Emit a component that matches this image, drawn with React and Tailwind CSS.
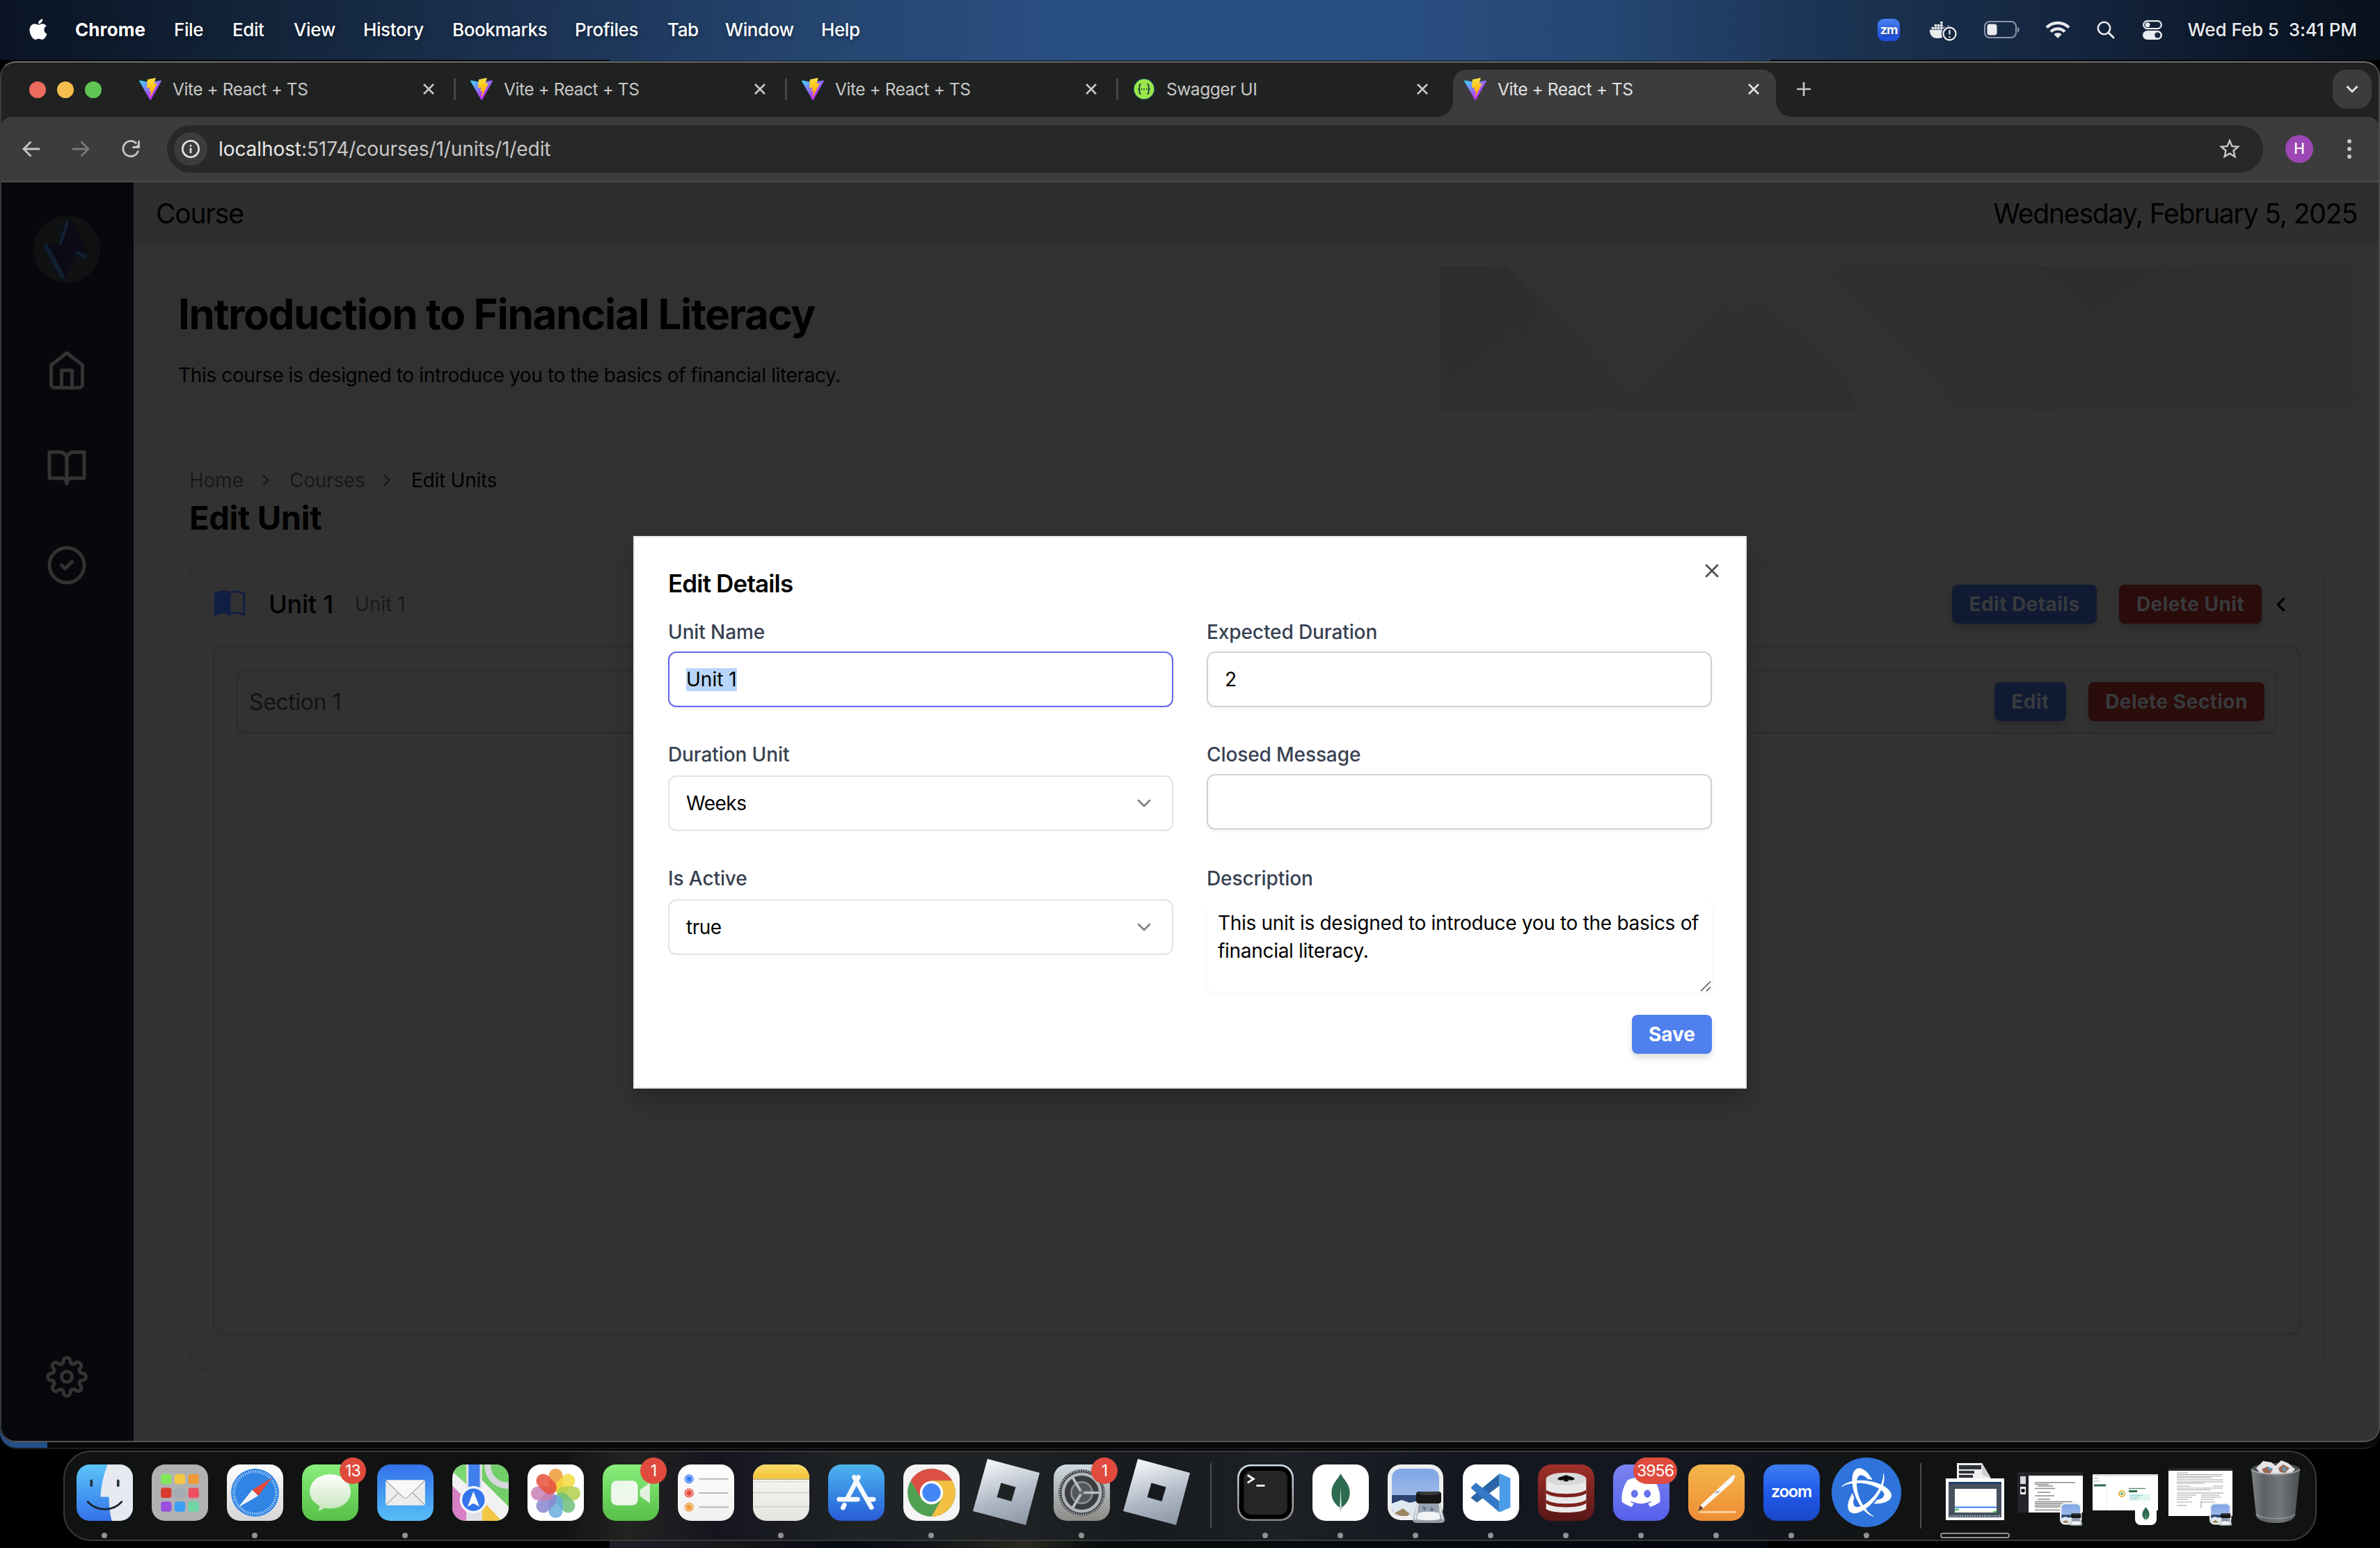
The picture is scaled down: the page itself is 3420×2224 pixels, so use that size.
import React from "react";
import { ChevronDown, ChevronLeft, ChevronRight, CircleCheck, X } from "lucide-react";
import { FiBookOpen, FiHome, FiSettings } from "react-icons/fi";
import { BsBookHalf } from "react-icons/bs";
import { FaApple, FaDiscord, FaDocker } from "react-icons/fa";
import { MdStarBorder } from "react-icons/md";
import { SiBattledotnet } from "react-icons/si";

/* ---------- menu bar ---------- */

const MENUS = [
  ["Chrome", "w-[142px] font-bold tracking-[0.1px]"],
  ["File", "w-[84px]"],
  ["Edit", "w-[88px]"],
  ["View", "w-[100px]"],
  ["History", "w-[128px]"],
  ["Bookmarks", "w-[176px]"],
  ["Profiles", "w-[133px]"],
  ["Tab", "w-[83px]"],
  ["Window", "w-[138px]"],
  ["Help", "w-[80px]"],
];

function MenuBar() {
  return (
    <header className="flex h-[86px] shrink-0 items-center justify-between bg-[linear-gradient(90deg,#0a1424_0%,#13243a_11%,#1c3354_23%,#24456f_34%,#2a4f82_45%,#2a5083_57%,#244672_68%,#1c3555_76%,#14253f_87%,#0b1626_96%,#08111d_100%)] pr-[33px] pb-[1px] pl-[38px] text-[26px] text-white [text-shadow:0_2px_6px_rgba(0,0,0,0.45)]">
      <nav className="flex items-center font-medium tracking-[-0.4px]">
        <div className="w-[70px]">
          <FaApple className="mb-[2px] size-[34px]" />
        </div>
        {MENUS.map(([label, cls]) => (
          <span key={label} className={cls}>
            {label}
          </span>
        ))}
      </nav>
      <div className="flex items-center text-[#e9ebee]">
        <span className="flex size-[32px] items-center justify-center rounded-[9px] bg-gradient-to-b from-[#4a80f0] to-[#1c4ce0] text-[18px] font-bold tracking-[-1px] text-white">
          zm
        </span>
        <div className="relative ml-[43px] h-[34px] w-[40px]">
          <FaDocker className="size-[34px]" />
          <svg viewBox="0 0 22 22" className="absolute right-0 bottom-0 size-[23px]">
            <circle cx="11" cy="11" r="11" fill="#14253f" />
            <circle cx="11" cy="11" r="8.6" fill="none" stroke="currentColor" strokeWidth="2.2" />
            <path d="M11 6v6M11 14.6v1.8" stroke="currentColor" strokeWidth="2.2" />
          </svg>
        </div>
        <svg viewBox="0 0 52 26" className="ml-[38px] h-[26px] w-[52px]">
          <rect x="1" y="1" width="45" height="23" rx="7" fill="none" stroke="#8b97a7" strokeWidth="2" />
          <rect x="4.5" y="4.5" width="14" height="16" rx="3.5" fill="#e9ebee" />
          <path d="M48 8.5c3.4 1.4 3.4 7 0 8.400z" fill="#8b97a7" />
        </svg>
        <svg viewBox="0 0 36 26" className="ml-[36px] h-[26px] w-[36px]" fill="none" stroke="currentColor">
          <path d="M2 9.500C11 .6 25 .6 34 9.500" strokeWidth="4.200" />
          <path d="M8 15.500C13.500 10 22.500 10 28 15.500" strokeWidth="4.200" />
          <path d="M18 25l-5.500-5.700c3-2.600 8-2.600 11 0z" fill="currentColor" stroke="none" />
        </svg>
        <svg viewBox="0 0 26 26" className="ml-[38px] size-[26px]" fill="none" stroke="currentColor" strokeLinecap="round">
          <circle cx="10.500" cy="10.500" r="8.700" strokeWidth="2.600" />
          <path d="M17 17l7 7" strokeWidth="3" />
        </svg>
        <svg viewBox="0 0 28 28" className="ml-[40px] size-[28px]">
          <rect x="1.200" y="1.200" width="25.600" height="11" rx="5.500" fill="none" stroke="currentColor" strokeWidth="2.200" />
          <circle cx="7" cy="6.700" r="3.400" fill="currentColor" />
          <rect x="0" y="15" width="28" height="13" rx="6.500" fill="currentColor" />
          <circle cx="21.300" cy="21.500" r="4" fill="#14253f" />
        </svg>
        <span className="ml-[35px] w-[245px] text-right font-medium tracking-[-0.05px] whitespace-pre">Wed Feb 5  3:41 PM</span>
      </div>
    </header>
  );
}

/* ---------- browser chrome ---------- */

function ViteLogo() {
  return (
    <svg viewBox="0 0 256 257" className="size-[32px] shrink-0">
      <defs>
        <linearGradient id="viteBody" x1="-.8%" x2="57.600%" y1="7.700%" y2="78.400%">
          <stop offset="0%" stopColor="#41D1FF" />
          <stop offset="100%" stopColor="#BD34FE" />
        </linearGradient>
        <linearGradient id="viteBolt" x1="43.400%" x2="50.300%" y1="2.200%" y2="89%">
          <stop offset="0%" stopColor="#FFEA83" />
          <stop offset="8%" stopColor="#FFDD35" />
          <stop offset="100%" stopColor="#FFA800" />
        </linearGradient>
      </defs>
      <path
        fill="url(#viteBody)"
        d="M255.153 37.938L134.897 252.976c-2.483 4.440-8.862 4.466-11.382.048L.875 37.958c-2.746-4.814 1.371-10.646 6.827-9.670l120.385 21.517a6.537 6.537 0 0 0 2.322-.004l117.867-21.483c5.438-.991 9.574 4.796 6.877 9.620Z"
      />
      <path
        fill="url(#viteBolt)"
        d="M185.432.063L96.440 17.501a3.268 3.268 0 0 0-2.634 3.014l-5.474 92.456a3.268 3.268 0 0 0 3.997 3.378l24.777-5.718c2.318-.535 4.413 1.507 3.936 3.838l-7.361 36.047c-.495 2.426 1.782 4.500 4.151 3.780l15.304-4.649c2.372-.720 4.652 1.360 4.150 3.788l-11.698 56.621c-.732 3.542 3.979 5.473 5.943 2.437l1.313-2.028l72.516-144.720c1.215-2.423-.880-5.186-3.540-4.672l-25.505 4.922c-2.396.462-4.435-1.770-3.759-4.114l16.646-57.705c.677-2.350-1.370-4.583-3.769-4.113Z"
      />
    </svg>
  );
}

function SwaggerLogo() {
  return (
    <svg viewBox="0 0 32 32" className="size-[32px] shrink-0">
      <circle cx="16" cy="16" r="15.500" fill="#17435a" />
      <circle cx="16" cy="16" r="14.300" fill="#9be84a" />
      <g fill="none" stroke="#1c3b3f" strokeWidth="1.800">
        <path d="M11.500 9c-2.500 0-2 2-2 4s-.5 3-2 3c1.500 0 2 1 2 3s-.5 4 2 4" />
        <path d="M20.500 9c2.500 0 2 2 2 4s.5 3 2 3c-1.500 0-2 1-2 3s.5 4-2 4" />
      </g>
      <g fill="#1c3b3f">
        <circle cx="12.300" cy="16" r="1.100" />
        <circle cx="16" cy="16" r="1.100" />
        <circle cx="19.700" cy="16" r="1.100" />
      </g>
    </svg>
  );
}

function CloseGlyph() {
  return (
    <svg viewBox="0 0 16 16" className="size-[16px]" stroke="currentColor" strokeWidth="2.600">
      <path d="M1 1l14 14M15 1L1 15" />
    </svg>
  );
}

function Tab({ title, swagger, active, divider }) {
  return (
    <div className={active ? "relative flex h-[78px] w-[476px] items-start text-[#e3e3e3]" : "relative flex h-[78px] w-[476px] items-start text-[#c7c7c7]"}>
      {active && (
        <>
          <div className="absolute top-[10px] left-[12px] h-[68px] w-[464px] rounded-t-[20px] bg-[#3c3c3c]" />
          <svg viewBox="0 0 24 24" className="absolute bottom-0 left-[-12px] size-[24px]">
            <path d="M24 0v24H0C14 24 24 14 24 0z" fill="#3c3c3c" />
          </svg>
          <svg viewBox="0 0 24 24" className="absolute right-[-24px] bottom-0 size-[24px]">
            <path d="M0 0v24h24C10 24 0 14 0 0z" fill="#3c3c3c" />
          </svg>
        </>
      )}
      <div className="relative mt-[10px] flex h-[56px] w-full items-center pr-[24px] pl-[28px]">
        {swagger ? <SwaggerLogo /> : <ViteLogo />}
        <span className="ml-[16px] flex-1 text-[24.500px] tracking-[-0.45px]">{title}</span>
        <CloseGlyph />
      </div>
      {divider && <div className="absolute top-[22px] right-[-7px] h-[32px] w-[3px] rounded bg-[#454746]" />}
    </div>
  );
}

function TabStrip() {
  return (
    <div className="flex h-[78px] items-start bg-[#202221]">
      <div className="flex h-full w-[172px] items-center gap-[16px] pl-[42px]">
        <span className="size-[24px] rounded-full bg-[#ed6a5e]" />
        <span className="size-[24px] rounded-full bg-[#f4bf4f]" />
        <span className="size-[24px] rounded-full bg-[#61c554]" />
      </div>
      <Tab title="Vite + React + TS" divider />
      <Tab title="Vite + React + TS" divider />
      <Tab title="Vite + React + TS" divider />
      <Tab title="Swagger UI" swagger />
      <Tab title="Vite + React + TS" active />
      <svg viewBox="0 0 20 20" className="mt-[28px] ml-[30px] size-[20px]" stroke="#c7c7c7" strokeWidth="2.600">
        <path d="M10 0v20M0 10h20" />
      </svg>
      <div className="mt-[10px] mr-[12px] ml-auto flex size-[56px] items-center justify-center rounded-[20px] bg-[#3c3c3c]">
        <svg viewBox="0 0 18 12" className="h-[12px] w-[18px]" fill="none" stroke="#e3e3e3" strokeWidth="3">
          <path d="M1.500 2L9 9.500 16.500 2" />
        </svg>
      </div>
    </div>
  );
}

function Toolbar() {
  return (
    <div className="bg-[#202221]">
      <div className="flex h-[94px] items-center rounded-t-[18px] border-b-2 border-[#4a4a4a] bg-[#3c3c3c] pl-[32px] text-[#c7c7c7]">
        <svg viewBox="0 0 26 24" className="h-[24px] w-[26px]" fill="none" stroke="currentColor" strokeWidth="2.800">
          <path d="M25 12H2.500M12.500 1.500L2 12l10.500 10.500" />
        </svg>
        <svg viewBox="0 0 26 24" className="ml-[45px] h-[24px] w-[26px]" fill="none" stroke="#7a7a7a" strokeWidth="2.800">
          <path d="M1 12h22.500M13.500 1.500L24 12 13.500 22.500" />
        </svg>
        <svg viewBox="0 0 26 26" className="ml-[46px] size-[26px]" fill="none" stroke="currentColor" strokeWidth="2.800">
          <path d="M23.500 15.500A11 11 0 1 1 21 5.200" />
          <path d="M24.500 1v9.500H15.500" />
          <path d="M24.500 5v5.500H19z" fill="currentColor" stroke="none" />
        </svg>
        <div className="ml-[39px] flex h-[68px] w-[3012px] items-center rounded-full bg-[#282828] pl-[10px]">
          <div className="flex size-[48px] items-center justify-center rounded-full bg-[#3c3c3c]">
            <svg viewBox="0 0 26 26" className="size-[26px]" fill="none" stroke="#e3e3e3">
              <circle cx="13" cy="13" r="11.700" strokeWidth="2.600" />
              <path d="M13 11.500V19M13 7v2.600" strokeWidth="2.600" />
            </svg>
          </div>
          <span className="ml-[16px] text-[28px] tracking-[-0.08px] text-[#c7c7c7]">
            <span className="text-[#e8e8e8]">localhost</span>:5174/courses/1/units/1/edit
          </span>
          <MdStarBorder className="mr-[30px] ml-auto size-[36px]" />
        </div>
        <span className="ml-[32px] flex size-[40px] items-center justify-center rounded-full bg-[#9c47b5] text-[21px] font-medium text-white">H</span>
        <div className="ml-[49px] flex flex-col gap-[5px]">
          <i className="size-[6px] rounded-full bg-[#c7c7c7]" />
          <i className="size-[6px] rounded-full bg-[#c7c7c7]" />
          <i className="size-[6px] rounded-full bg-[#c7c7c7]" />
        </div>
      </div>
    </div>
  );
}

/* ---------- course page ---------- */

function SideNav() {
  return (
    <aside className="flex w-[192px] shrink-0 flex-col items-center bg-[#06080c] pt-[48px] pb-[62px] text-[#333333]">
      <svg viewBox="0 0 96 96" className="size-[96px]">
        <circle cx="48" cy="48" r="48" fill="#0f1113" />
        <path d="M52 4C62 22 72 40 79 54L62 56 44 92 18 41 40 42z" fill="#0b0a15" />
        <g fill="none" stroke="#0f2033" strokeLinecap="round">
          <path d="M48.500 10L39 40" strokeWidth="4.500" />
          <path d="M18 43L42 88" strokeWidth="6" />
          <path d="M63 53L74 58" strokeWidth="5" />
        </g>
      </svg>
      <FiHome className="mt-[96px] size-[60px]" />
      <FiBookOpen className="mt-[80px] size-[60px]" />
      <CircleCheck className="mt-[80px] size-[60px]" />
      <FiSettings className="mt-auto size-[60px]" />
    </aside>
  );
}

function Hero() {
  return (
    <section className="mx-[32px] mt-[32px] flex h-[208px] justify-between overflow-hidden rounded-[20px] bg-[#313131]">
      <div className="p-[32px]">
        <h1 className="text-[60px] leading-[74px] font-bold tracking-[-1.300px]">Introduction to Financial Literacy</h1>
        <p className="mt-[31px] text-[28px] leading-[40px] tracking-[-0.360px]">This course is designed to introduce you to the basics of financial literacy.</p>
      </div>
      <svg viewBox="0 0 1318 208" className="h-[208px] w-[1318px]">
        <defs>
          <linearGradient id="facetA" x1="0" x2="1" y1="0" y2="1">
            <stop offset="0" stopColor="#2d2d2d" />
            <stop offset="1" stopColor="#303030" />
          </linearGradient>
          <linearGradient id="facetB" x1="0" x2="0" y1="0" y2="1">
            <stop offset="0" stopColor="#313131" />
            <stop offset="1" stopColor="#2f2f2f" />
          </linearGradient>
        </defs>
        <rect width="1318" height="208" fill="#303030" />
        <path d="M92 0H580L566 16 752 208H296z" fill="#313131" />
        <path d="M0 0H92L296 208H0z" fill="url(#facetA)" />
        <path d="M432 20L580 168Q594 184 594 208H256z" fill="url(#facetB)" />
        <path d="M504 92L400 208H594Q594 184 580 168z" fill="#2f2f2f" />
        <path d="M859 0H1040L931 71z" fill="#2e2e2e" />
        <path d="M1040 0H1086L880 208H852L955 98 931 71z" fill="#2f2f2f" />
      </svg>
    </section>
  );
}

function PageButton({ children, className }) {
  return (
    <span
      className={
        "flex h-[56px] items-center justify-center rounded-[8px] text-[28px] font-bold tracking-[0.450px] text-[#383a3d] shadow-[0_6px_10px_rgba(0,0,0,0.15)] " + className
      }
    >
      {children}
    </span>
  );
}

function UnitCard() {
  return (
    <section className="mx-[80px] h-[1162px] rounded-[24px] border-2 border-[#2e2e2e] p-[32px] pb-[48px]">
      <div className="flex h-[56px] items-center">
        <BsBookHalf className="ml-[2px] size-[44px] text-[#111e43]" />
        <span className="ml-[34px] w-[124px] text-[36px] font-medium tracking-[-0.200px]">Unit 1</span>
        <span className="text-[28px] text-[#18191b]">Unit 1</span>
        <div className="mr-[12px] ml-auto flex items-center">
          <PageButton className="w-[208px] bg-[#101b33]">Edit Details</PageButton>
          <PageButton className="ml-[32px] w-[205px] bg-[#2a0c0a]">Delete Unit</PageButton>
          <ChevronLeft className="ml-[11px] size-[33px]" strokeWidth={2.5} />
        </div>
      </div>
      <div className="mt-[32px] h-[990px] rounded-[16px] border-2 border-[#2b2b2b] p-[32px]">
        <div className="flex h-[92px] items-center rounded-[12px] border-2 border-[#2b2b2b] px-[16px]">
          <span className="pt-[2px] text-[32px] tracking-[-0.4px] text-[#111315]">Section 1</span>
          <PageButton className="ml-auto w-[103px] bg-[#101b33]">Edit</PageButton>
          <PageButton className="ml-[32px] w-[253px] bg-[#2a0c0a]">Delete Section</PageButton>
        </div>
      </div>
    </section>
  );
}

function CoursePage() {
  return (
    <main className="flex min-w-0 flex-1 flex-col bg-[#323232] text-black">
      <div className="flex h-[88px] shrink-0 items-center justify-between bg-[#2e2e2e] pt-[2px] pr-[33px] pl-[32px] text-[39px]">
        <span className="tracking-[-1.200px]">Course</span>
        <span className="tracking-[-1.150px]">Wednesday, February 5, 2025</span>
      </div>
      <Hero />
      <div className="mt-[80px] flex h-[40px] items-center px-[80px] text-[28px] tracking-[-0.250px] text-[#181818]">
        <span className="w-[96px]">Home</span>
        <ChevronRight className="size-[28px]" />
        <span className="ml-[20px] w-[126px]">Courses</span>
        <ChevronRight className="size-[28px]" />
        <span className="ml-[21px] text-black">Edit Units</span>
      </div>
      <h2 className="mb-[28px] h-[68px] px-[80px] text-[47px] leading-[68px] font-bold tracking-[-0.300px]">Edit Unit</h2>
      <UnitCard />
    </main>
  );
}

/* ---------- edit dialog ---------- */

function Label({ children }) {
  return <div className="text-[28px] leading-[40px] font-medium tracking-[-0.100px] text-[#374151]">{children}</div>;
}

function Input({ children, focused }) {
  return (
    <div
      className={
        focused
          ? "mt-[8px] flex h-[80px] items-center rounded-[12px] border-2 border-[#6366f1] px-[24px] text-[28px] shadow-[0_2px_4px_rgba(0,0,0,0.05)]"
          : "mt-[8px] flex h-[80px] items-center rounded-[12px] border-2 border-[#d1d1da] px-[24px] text-[28px] shadow-[0_2px_4px_rgba(0,0,0,0.05)]"
      }
    >
      {children}
    </div>
  );
}

function Select({ children }) {
  return (
    <div className="mt-[10px] flex h-[80px] items-center justify-between rounded-[12px] border-2 border-[#e4e4e7] px-[24px] text-[28px] tracking-[-0.500px]">
      {children}
      <ChevronDown className="size-[32px] text-[#808080]" />
    </div>
  );
}

function EditDialog() {
  return (
    <div className="absolute top-[770px] left-[910px] h-[794px] w-[1600px] border-2 border-[#e5e5e5] bg-white p-[48px] text-black shadow-[0_20px_30px_rgba(0,0,0,0.2)]">
      <X className="absolute top-[32px] right-[32px] size-[32px] text-[#4d4d4d]" />
      <h3 className="text-[35px] leading-[36px] font-semibold tracking-[-0.850px]">Edit Details</h3>
      <div className="mt-[32px] grid grid-cols-2 gap-x-[48px] gap-y-[48px]">
        <div>
          <Label>Unit Name</Label>
          <Input focused>
            <span className="bg-[#b8d5fb] leading-[33px]">Unit 1</span>
          </Input>
        </div>
        <div>
          <Label>Expected Duration</Label>
          <Input>2</Input>
        </div>
        <div>
          <Label>Duration Unit</Label>
          <Select>Weeks</Select>
        </div>
        <div>
          <Label>Closed Message</Label>
          <Input />
        </div>
        <div>
          <Label>Is Active</Label>
          <Select>true</Select>
        </div>
        <div>
          <Label>Description</Label>
          <div className="relative mt-[8px] h-[136px] rounded-[12px] px-[16px] pt-[16px] text-[28px] leading-[40px] tracking-[-0.300px] whitespace-nowrap shadow-[0_2px_4px_rgba(0,0,0,0.05)]">
            This unit is designed to introduce you to the basics of
            <br />
            financial literacy.
            <svg viewBox="0 0 16 16" className="absolute right-[1px] bottom-[1px] size-[16px]" stroke="#555555" strokeWidth="1.600">
              <path d="M1 15L15 1M9 15l6-6" />
            </svg>
          </div>
        </div>
      </div>
      <div className="mt-[32px] flex justify-end">
        <span className="flex h-[56px] w-[115px] items-center justify-center rounded-[8px] bg-[#4f80ee] text-[28px] font-bold text-white shadow-[0_6px_10px_rgba(0,0,0,0.13)]">
          Save
        </span>
      </div>
    </div>
  );
}

/* ---------- dock ---------- */

function Tile({ className, children }) {
  return (
    <svg viewBox="0 0 80 80" className={"size-[81px] rounded-[19px] " + className}>
      {children}
    </svg>
  );
}

function Finder() {
  return (
    <Tile className="bg-gradient-to-b from-[#5ec5f7] to-[#3670ea]">
      <path d="M44 0C38 16 35 30 34 46h12c0 12 1 22 4 34h30V0z" fill="#e6eaf0" />
      <path d="M21 23v7M59 23v7" stroke="#22303c" strokeWidth="3.600" strokeLinecap="round" />
      <path d="M16 53c12 14 36 14 48 0" fill="none" stroke="#17212b" strokeWidth="2.800" strokeLinecap="round" />
    </Tile>
  );
}

const PADS = ["#7fe85a", "#f4c845", "#ee9a38", "#d93a2c", "#a3adb2", "#ee4f62", "#9a4fe0", "#3aa0f5", "#6fd6a8"];

function Launchpad() {
  return (
    <Tile className="bg-[#b0b1b3]">
      {PADS.map((c, i) => (
        <rect key={c} x={13 + (i % 3) * 19.5} y={13.5 + Math.floor(i / 3) * 19.5} width="15" height="14.500" rx="3.500" fill={c} />
      ))}
    </Tile>
  );
}

function Safari() {
  return (
    <Tile className="bg-gradient-to-b from-white to-[#d5d5d7]">
      <circle cx="40" cy="40" r="34" fill="#2f84e4" />
      <circle cx="40" cy="40" r="30" fill="none" stroke="#cfe6fb" strokeWidth="4" strokeDasharray="1 2.140" />
      <path d="M64 19L44.500 44.500 36 36z" fill="#e5483b" />
      <path d="M16 61L44.500 44.500 36 36z" fill="#f3f4f6" />
    </Tile>
  );
}

function Messages() {
  return (
    <Tile className="bg-gradient-to-b from-[#88ef7c] to-[#57bf47]">
      <defs>
        <linearGradient id="bubble" x1="0" x2="0" y1="0" y2="1">
          <stop offset="0" stopColor="#ffffff" />
          <stop offset="1" stopColor="#c5e6bb" />
        </linearGradient>
      </defs>
      <path d="M40 14c17 0 29 10.500 29 24.500S57 62.500 40 62.500c-3 0-5.500-.3-8-1-2.500 2.500-6 4-10 4.200 2-2 3-4.500 2.800-7.200C16 54 11 47 11 38.500 11 24.500 23 14 40 14z" fill="url(#bubble)" />
    </Tile>
  );
}

function Mail() {
  return (
    <Tile className="bg-gradient-to-b from-[#3670ea] to-[#58bdf7]">
      <rect x="12" y="22" width="56" height="36" rx="2.500" fill="#ececec" />
      <path d="M13 57l20-20M67 57L47 37" stroke="#a9a9a9" strokeWidth="1.200" />
      <path d="M12.500 23l24 23c2 2 5 2 7 0l24-23" fill="#f8f8f8" stroke="#a9a9a9" strokeWidth="1.200" />
    </Tile>
  );
}

function Maps() {
  return (
    <Tile className="bg-[#f1f1f3]">
      <path d="M0 0h20v28L0 10z" fill="#7cd672" />
      <path d="M42 0h38v60L42 22z" fill="#72ce68" />
      <path d="M50 0c0 18 12 30 30 30" fill="none" stroke="#d6d8dc" strokeWidth="9" />
      <path d="M0 30l20 20v30H0z" fill="#d77fc4" />
      <path d="M42 50l28 30H42z" fill="#f3c746" />
      <path d="M20 0h22v80H20z" fill="#dfe1e6" />
      <path d="M23 0h16v36H23z" fill="#3f7fee" />
      <circle cx="30" cy="50" r="19.500" fill="#f4f5f8" />
      <circle cx="30" cy="50" r="16" fill="#3576ee" />
      <path d="M30 38l8.500 22L30 55l-8.500 5z" fill="#fff" />
    </Tile>
  );
}

const PETALS = ["#f09a37", "#f3da3c", "#b3cf4c", "#6fbf7c", "#6aaede", "#8a86cf", "#c97fb2", "#e8503c"];

function Photos() {
  return (
    <Tile className="bg-white">
      {PETALS.map((c, i) => (
        <rect key={c} x="30" y="6" width="20" height="33" rx="10" fill={c} opacity="0.85" transform={`rotate(${i * 45} 40 41)`} />
      ))}
    </Tile>
  );
}

function FaceTime() {
  return (
    <Tile className="bg-gradient-to-b from-[#88ef7c] to-[#57bf47]">
      <rect x="12" y="23" width="38" height="35" rx="8" fill="#eef7ec" />
      <path d="M53 36l14-10v29L53 45z" fill="#e2f2de" />
    </Tile>
  );
}

function Reminders() {
  return (
    <Tile className="bg-gradient-to-b from-white to-[#f1f0ee]">
      {["#3478f6", "#e5483b", "#ef9a35"].map((c, i) => (
        <g key={c}>
          <circle cx="16" cy={20.500 + i * 20} r="5.700" fill="none" stroke={c} strokeWidth="1.500" />
          <circle cx="16" cy={20.500 + i * 20} r="3.900" fill={c} />
          <path d={`M30 ${20.500 + i * 20}h42`} stroke="#b9b9be" strokeWidth="1.800" />
        </g>
      ))}
    </Tile>
  );
}

function Notes() {
  return (
    <Tile className="bg-gradient-to-b from-[#fbfaf8] to-[#e6e4df]">
      <defs>
        <linearGradient id="noteTop" x1="0" x2="0" y1="0" y2="1">
          <stop offset="0" stopColor="#f9dc6c" />
          <stop offset="1" stopColor="#f3c434" />
        </linearGradient>
      </defs>
      <rect width="80" height="20" fill="url(#noteTop)" />
      <path d="M0 21h80" stroke="#b9a877" strokeWidth="1.400" />
      <path d="M2 24.500h76" stroke="#b5b2aa" strokeWidth="1.500" strokeDasharray="1.500 2" />
      <path d="M0 40h80M0 60h80" stroke="#cfcdc8" strokeWidth="1.300" />
    </Tile>
  );
}

function AppStore() {
  return (
    <Tile className="bg-gradient-to-b from-[#4fb4ee] to-[#2a5bd8]">
      <g stroke="#f6f9fd" strokeWidth="6.500" strokeLinecap="round">
        <path d="M43 18L27.500 47.500M37 18l24.500 43" />
        <path d="M15.500 49.500H42M56 49.500h8.500" />
        <path d="M23 57.500l-2 4" />
      </g>
    </Tile>
  );
}

function Chrome() {
  return (
    <Tile className="bg-[#f4f4f4]">
      <circle cx="40" cy="40" r="34" fill="#51a153" />
      <path d="M10.600 23A34 34 0 0 1 69.400 23H40L25.300 48.500z" fill="#dc5044" />
      <path d="M69.400 23A34 34 0 0 1 40 74L54.700 48.500 40 23z" fill="#f3c044" />
      <circle cx="40" cy="40" r="16.500" fill="#fff" />
      <circle cx="40" cy="40" r="13" fill="#4285f4" />
    </Tile>
  );
}

function Roblox() {
  return (
    <svg viewBox="0 0 96 96" className="size-[96px]">
      <defs>
        <linearGradient id="robloxSteel" x1="0.300" x2="0.600" y1="0" y2="1">
          <stop offset="0" stopColor="#f6f8fb" />
          <stop offset="0.550" stopColor="#b4bdc9" />
          <stop offset="1" stopColor="#8f99a8" />
        </linearGradient>
      </defs>
      <path fillRule="evenodd" fill="url(#robloxSteel)" d="M21 0l75 20-20 75L0 75zM40.500 34.500l-6 20.500 21 6 6-20.500z" />
    </svg>
  );
}

function SystemSettings() {
  return (
    <Tile className="bg-gradient-to-b from-[#cfdbe2] to-[#8d8a86]">
      <circle cx="40" cy="40" r="33" fill="#3b3d3f" />
      <circle cx="40" cy="40" r="31.500" fill="none" stroke="#a6a9ac" strokeWidth="3" strokeDasharray="1.700 1.600" />
      <circle cx="40" cy="40" r="26.500" fill="none" stroke="#b2b5b8" strokeWidth="4.500" />
      <circle cx="40" cy="40" r="15" fill="#55585b" stroke="#8d9093" strokeWidth="2.500" />
      <path d="M40 40h25M40 40L27 18.500M40 40L27 61.500" stroke="#bcbfc2" strokeWidth="3.600" />
      <circle cx="40" cy="40" r="3" fill="#6b6e70" />
    </Tile>
  );
}

function Terminal() {
  return (
    <Tile className="bg-gradient-to-b from-[#cfe0ea] to-[#8a8480]">
      <rect x="2.500" y="2.500" width="75" height="75" rx="17" fill="#000" />
      <rect x="9" y="9" width="62" height="62" rx="10" fill="#252525" />
      <path d="M14.500 15l8.500 5.500-8.500 5.500" fill="none" stroke="#fff" strokeWidth="2.800" />
      <path d="M27 30h12" stroke="#fff" strokeWidth="2.800" />
    </Tile>
  );
}

function Mongo({ small }) {
  return (
    <svg viewBox="0 0 80 80" className={small ? "size-[31px] rounded-[8px] bg-white" : "size-[81px] rounded-[19px] bg-white"}>
      <path d="M40 13c5 9 13 15 13 27 0 11-6 17-11.500 21L40 67l-1.500-6C33 57 27 51 27 40c0-12 8-18 13-27z" fill="#2d6a4f" />
      <path d="M40 32l1.200 28L40 67l-1.200-7z" fill="#dfe9e2" />
    </svg>
  );
}

function Preview({ small }) {
  return (
    <svg viewBox="0 0 84 84" className={small ? "size-[33px]" : "mt-[3px] ml-[3px] size-[84px]"}>
      <defs>
        <linearGradient id="sky" x1="0" x2="0" y1="0" y2="1">
          <stop offset="0" stopColor="#7fa6e6" />
          <stop offset="1" stopColor="#b3c6e8" />
        </linearGradient>
      </defs>
      <rect width="80" height="80" rx="19" fill="#efefef" />
      <rect x="6" y="6" width="68" height="68" rx="13" fill="url(#sky)" />
      <path d="M6 44h68v17a13 13 0 0 1-13 13H19A13 13 0 0 1 6 61z" fill="#2d4470" />
      <path d="M6 56l14-5 12 4 12-3v22H19A13 13 0 0 1 6 61z" fill="#dfe8f0" />
      <path d="M10 70l12-7 10 8-4 3h-9z" fill="#9c8560" />
      <path d="M43 54h32l7 24c1 4-2 6-6 6H42c-4 0-7-2-6-6z" fill="#a9b1ba" opacity="0.850" />
      <path d="M44 55l-5 24M74 55l5 24" stroke="#e9ecee" strokeWidth="2" />
      <path d="M44 70c6-3 24-3 30 0l2 8c-6 3-28 3-34 0z" fill="#f1f3f4" />
      <path d="M50 60l5 2-2 5zM63 61l4 5-6 1z" fill="#5d6b86" />
      <rect x="41" y="39" width="36" height="17" rx="4" fill="#161616" />
      <ellipse cx="59" cy="41.500" rx="16" ry="2.500" fill="#3b3b3b" />
    </svg>
  );
}

function VSCode() {
  return (
    <Tile className="bg-white">
      <path d="M52 13v17L20 54l-8-6 0-1.500z" fill="#2a66a8" />
      <path d="M18.500 26L52 52v16L12 34v-2z" fill="#3478c6" />
      <path d="M52 12.500l15.500 7V61L52 68z" fill="#4a9be8" />
    </Tile>
  );
}

function SequelAce() {
  return (
    <Tile className="bg-gradient-to-b from-[#a0302a] to-[#581716]">
      <path d="M11.500 20v43c6 7 51 7 57 0V20z" fill="#e9e9e9" />
      <path d="M11.500 36c10 7.500 47 7.500 57 0v5c-10 7.500-47 7.500-57 0zM11.500 50c10 7.500 47 7.500 57 0v5c-10 7.500-47 7.500-57 0z" fill="#7d201d" />
      <ellipse cx="40" cy="20.500" rx="28.500" ry="9" fill="#d9d9d9" />
      <path d="M40 15c4 1.500 12 3 12 5.500 0 2-7 2.600-10 1l2 2.500h-8l2-2.500c-3 1.600-10 1-10-1 0-2.500 8-4 12-5.500z" fill="#0a0a0a" />
    </Tile>
  );
}

function Discord() {
  return (
    <div className="flex size-[81px] items-center justify-center rounded-[19px] bg-gradient-to-b from-[#7b83f0] to-[#5560ea] text-white">
      <FaDiscord className="size-[60px]" />
    </div>
  );
}

function Pages() {
  return (
    <Tile className="bg-gradient-to-b from-[#f4b64a] to-[#ee8d35]">
      <path d="M15 67.500h52" stroke="#fbd7a4" strokeWidth="2.600" />
      <path d="M66 15c1 2-1 7-3 10L21 62l-7 5 3-9L60 18c2-2 5-4 6-3z" fill="#f7f7f7" />
      <path d="M14 67l7-5-4-4z" fill="#55432f" />
      <path d="M38 40l6-1.500" stroke="#a9a9a9" strokeWidth="2" />
    </Tile>
  );
}

function Zoom() {
  return (
    <div className="flex size-[81px] items-center justify-center rounded-[19px] bg-gradient-to-b from-[#3e7df0] via-[#2059ea] to-[#1b47c8] pb-[2px] text-[23.500px] font-semibold tracking-[-1.200px] text-white">
      zoom
    </div>
  );
}

function BattleNet() {
  return (
    <div className="flex size-[100px] items-center justify-center rounded-full bg-[#2f74dc] text-white">
      <SiBattledotnet className="size-[72px]" />
    </div>
  );
}

function DocStack() {
  return (
    <svg viewBox="0 0 84 84" className="size-[84px]">
      <path d="M16 0h36l12 20v6H16z" fill="#efefef" />
      <path d="M19 3h32v6H19zM19 11h22v4H19zM19 17h20v4H19z" fill="#30343a" />
      <path d="M52 0v17l13 5z" fill="#cfcfcf" />
      <rect y="22" width="84" height="60" fill="#fff" />
      <rect x="4" y="27" width="76" height="51" fill="#46505f" />
      <rect x="4" y="27" width="76" height="3" fill="#223f68" />
      <rect x="13" y="37" width="60" height="34" fill="#fff" />
      <path d="M13 63.500h60" stroke="#3f7af0" strokeWidth="2" />
      <path d="M13 67h6M68 70h5" stroke="#58c45c" strokeWidth="2.500" />
      <path d="M6 76h72" stroke="#a6b4c6" strokeWidth="2" strokeDasharray="2 1.500" />
    </svg>
  );
}

function DarkDocThumb() {
  return (
    <div className="relative h-[96px] w-[94px] pt-[19px]">
      <svg viewBox="0 0 94 58" className="h-[58px] w-[94px]">
        <rect width="94" height="58" fill="#23252a" />
        <rect x="16" y="5" width="78" height="53" fill="#fff" />
        <rect x="4" y="6" width="8" height="11" fill="#d9d9d9" />
        <rect x="4" y="21" width="8" height="11" fill="#fff" />
        <rect x="5.500" y="24" width="5" height="5" fill="#111" />
        <g stroke="#8a8a8a" strokeWidth="1.300">
          <path d="M25 15h58M25 17.500h20M29 20h22M25 23.500h29M29 29h18M25 34h28M29 39h18" />
          <path d="M25 42.500h54M25 45h56M25 47.500h54M25 50h38M25 54.500h36" strokeWidth="1.600" />
        </g>
      </svg>
      <div className="absolute right-0 bottom-0">
        <Preview small />
      </div>
    </div>
  );
}

function CompassThumb() {
  return (
    <div className="relative h-[96px] w-[94px] pt-[22px]">
      <svg viewBox="0 0 94 52" className="h-[52px] w-[94px]">
        <rect width="94" height="52" fill="#fff" />
        <rect width="94" height="3" fill="#e3e3e3" />
        <path d="M20 3v49" stroke="#ececec" />
        <path d="M2 16h17" stroke="#2d6a4f" strokeWidth="3" />
        <path d="M2 6h6M2 10h8" stroke="#9aa5a0" />
        <circle cx="42" cy="28" r="4" fill="none" stroke="#e0b23c" strokeWidth="2" />
        <circle cx="42" cy="28" r="1.800" fill="#3f9e62" />
        <path d="M52 20.500h24" stroke="#4f8a70" strokeWidth="1.300" />
        <rect x="52" y="23" width="12" height="3" fill="#2d6a4f" />
        <rect x="52" y="28" width="31" height="10" fill="#dff7ee" />
        <path d="M54 30.500h18M54 33h14M54 35.500h10" stroke="#7cc3e0" strokeWidth="0.800" />
      </svg>
      <div className="absolute right-[2px] bottom-[1px]">
        <Mongo small />
      </div>
    </div>
  );
}

function ResumeThumb() {
  return (
    <div className="relative h-[96px] w-[92px] pt-[13px]">
      <svg viewBox="0 0 92 69" className="h-[69px] w-[92px]">
        <rect width="92" height="69" fill="#fff" />
        <rect width="92" height="4" fill="#23252a" />
        <g stroke="#a3a3a3" strokeWidth="1.100">
          <path d="M12 7h16M12 9.500h66M12 12h64M12 14h50M12 17h54M65 17h14M12 20h66M12 22h40M12 26h20M64 26h15M12 29h66M12 31.500h48" />
          <path d="M12 36h67" stroke="#6f6f6f" strokeWidth="0.700" />
          <path d="M12 39h28M47 39h26M12 42h22M47 42h28M12 45h16M47 45h18M12 49h22M47 49h20M12 54h14M47 47v11" />
        </g>
      </svg>
      <div className="absolute right-0 bottom-0">
        <Preview small />
      </div>
    </div>
  );
}

function Trash() {
  return (
    <svg viewBox="0 0 72 94" className="h-[94px] w-[72px]">
      <defs>
        <linearGradient id="bin" x1="0" x2="1" y1="0" y2="0">
          <stop offset="0" stopColor="#8a8d90" />
          <stop offset="0.250" stopColor="#65686b" />
          <stop offset="0.600" stopColor="#7b7e81" />
          <stop offset="1" stopColor="#4f5254" />
        </linearGradient>
      </defs>
      <ellipse cx="36" cy="14" rx="35" ry="9" fill="#4c4f51" />
      <path d="M8 12L18 2l12 2 6 5 8-8 10 4 10 9-8 8-20 2-20-2z" fill="#e4e4e4" />
      <path d="M16 14l8-4 8 3-4 8-8-1zM40 12l7-5 9 5-6 7-8-1z" fill="#9a6a55" />
      <path d="M24 10l8 3-5 3zM46 10l6 3-4 5z" fill="#4aa4cf" />
      <path d="M1 14c8 9 62 9 70 0l-7 66c-1 6-10 11-28 11S9 86 8 80z" fill="url(#bin)" opacity="0.93" />
      <path d="M8 78c6 9 50 9 56 0" fill="none" stroke="#a9acae" strokeWidth="1.500" opacity="0.700" />
      <path d="M1 14c8 9 62 9 70 0" fill="none" stroke="#b3b6b8" strokeWidth="1.500" />
    </svg>
  );
}

function DockItem({ children, running, open, badge }) {
  return (
    <div className="relative flex w-[108px] flex-col items-center">
      <div className="flex h-[100px] items-center justify-center">{children}</div>
      {running && <div className="mt-[8px] size-[8px] rounded-full bg-[#8f9194]" />}
      {open && <div className="mt-[8px] h-[8px] w-[100px] rounded-[4px] border-2 border-[#8f9194]" />}
      {badge && (
        <span className="absolute top-0 right-[2px] flex h-[38px] min-w-[38px] items-center justify-center rounded-full bg-[#e04b3e] px-[5px] text-[23px] tracking-[-0.900px] text-white">
          {badge}
        </span>
      )}
    </div>
  );
}

function DockDivider() {
  return (
    <div className="flex w-[48px] justify-center pt-[8px]">
      <div className="h-[94px] w-[2px] bg-[#4a4c4d]" />
    </div>
  );
}

function Dock() {
  return (
    <div className="relative mt-[12px] ml-[91px] flex h-[130px] w-[3238px] rounded-[40px] border-2 border-[#38393a] bg-[linear-gradient(90deg,#111312_0%,#111312_22%,#232321_25%,#15151f_29%,#1f2325_35%,#1f2325_42%,#171a1e_48%,#1d2126_54%,#14171f_62%,#14171f_74%,#111312_82%,#111312_100%)] pt-[8px] pl-[3px]">
      <DockItem running><Finder /></DockItem>
      <DockItem><Launchpad /></DockItem>
      <DockItem running><Safari /></DockItem>
      <DockItem badge="13"><Messages /></DockItem>
      <DockItem running><Mail /></DockItem>
      <DockItem><Maps /></DockItem>
      <DockItem><Photos /></DockItem>
      <DockItem badge="1"><FaceTime /></DockItem>
      <DockItem><Reminders /></DockItem>
      <DockItem running><Notes /></DockItem>
      <DockItem><AppStore /></DockItem>
      <DockItem running><Chrome /></DockItem>
      <DockItem><Roblox /></DockItem>
      <DockItem running badge="1"><SystemSettings /></DockItem>
      <DockItem><Roblox /></DockItem>
      <DockDivider />
      <DockItem running><Terminal /></DockItem>
      <DockItem running><Mongo /></DockItem>
      <DockItem running><Preview /></DockItem>
      <DockItem running><VSCode /></DockItem>
      <DockItem running><SequelAce /></DockItem>
      <DockItem running badge="3956"><Discord /></DockItem>
      <DockItem running><Pages /></DockItem>
      <DockItem running><Zoom /></DockItem>
      <DockItem running><BattleNet /></DockItem>
      <DockDivider />
      <DockItem open><DocStack /></DockItem>
      <DockItem><DarkDocThumb /></DockItem>
      <DockItem><CompassThumb /></DockItem>
      <DockItem><ResumeThumb /></DockItem>
      <DockItem><Trash /></DockItem>
    </div>
  );
}

export default function App() {
  return (
    <div className="relative flex h-[2224px] w-[3420px] flex-col overflow-hidden bg-black font-['Inter',sans-serif]">
      <MenuBar />
      <div className="h-[2px] shrink-0 px-[876px]">
        <div className="h-px bg-[#2f5596]" />
      </div>
      {/* bottom edge of the window stacked underneath */}
      <div className="absolute top-[2030px] left-0 flex h-[52px] w-[3420px] overflow-hidden rounded-b-[24px] border-b-2 border-[#1c1c1c] bg-[#080808]">
        <div className="w-[68px] bg-[#24508a]" />
      </div>
      {/* wallpaper strip visible below the dock */}
      <div className="absolute bottom-0 left-[876px] h-[10px] w-[1664px] bg-[linear-gradient(90deg,#1c2026_0%,#15161a_12%,#050a12_20%,#12161a_28%,#2a281f_36%,#080e0e_42%,#040a0d_60%,#04080f_100%)]" />
      <div className="relative flex h-[1984px] shrink-0 flex-col overflow-hidden rounded-[22px] bg-[#202221] py-[2px]">
        <TabStrip />
        <Toolbar />
        <div className="flex min-h-0 flex-1">
          <SideNav />
          <CoursePage />
        </div>
        <div className="absolute inset-0 rounded-[22px] border-2 border-t-[#6c6e6d] border-r-[#4b4c4c] border-b-[#565656] border-l-[#3a3b3b]" />
      </div>
      <EditDialog />
      <Dock />
    </div>
  );
}
